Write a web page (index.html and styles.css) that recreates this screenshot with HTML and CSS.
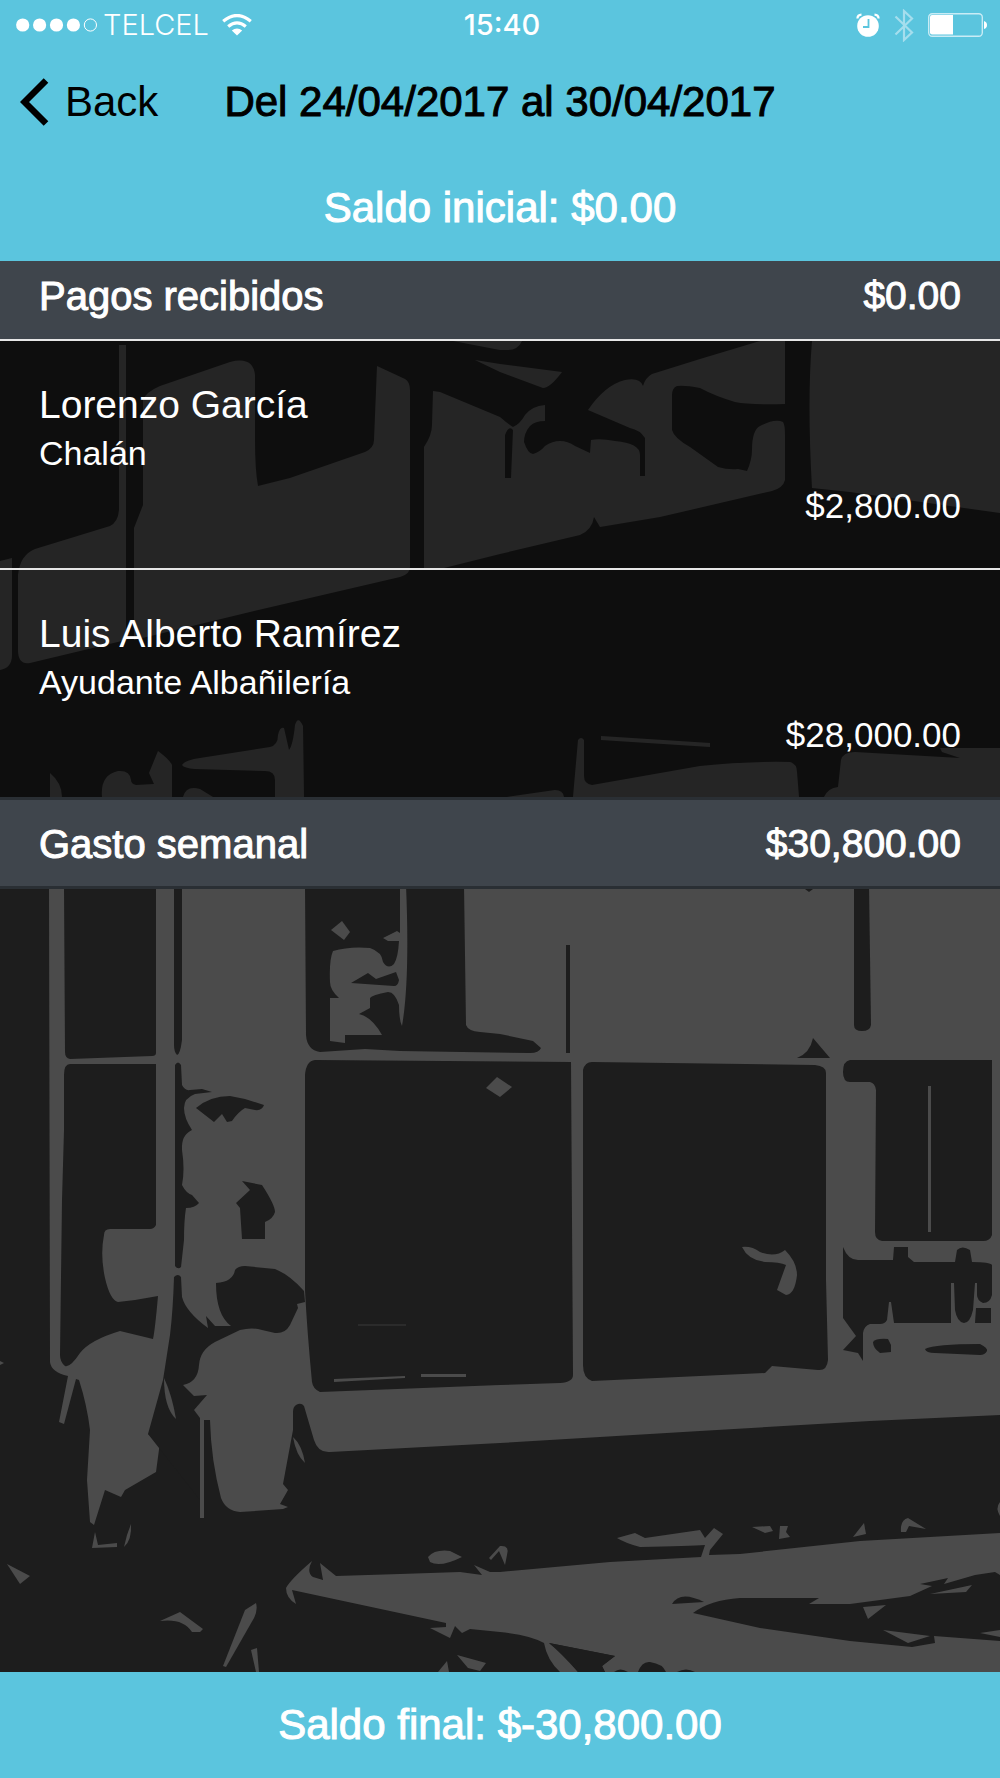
FILE: index.html
```html
<!DOCTYPE html>
<html lang="es">
<head>
<meta charset="utf-8">
<meta name="viewport" content="width=device-width, initial-scale=1">
<title>Del 24/04/2017 al 30/04/2017</title>
<link rel="stylesheet" href="styles.css">
</head>
<body>
<header class="top">
  <div class="status">
    <div class="status-left">
      <svg class="icon" width="82" height="14" viewBox="0 0 82 14" fill="#fff" role="img" aria-label="Señal">
        <circle cx="6.7" cy="7" r="6.6"/><circle cx="23.6" cy="7" r="6.6"/><circle cx="40.5" cy="7" r="6.6"/><circle cx="57.4" cy="7" r="6.6"/>
        <circle cx="74.4" cy="7" r="6.1" fill="none" stroke="#fff"/>
      </svg>
      <span class="carrier">TELCEL</span>
      <svg class="icon wifi" width="30" height="22" viewBox="0 0 30 22" role="img" aria-label="Wi-Fi">
        <path d="M1.2 7.2Q15-4.200 28.800 7.200M6.200 12.500Q15 5.200 23.800 12.500" fill="none" stroke="#fff" stroke-width="3.200"/>
        <path d="M9.800 16.400Q15 12.600 20.200 16.400L15 21.600Z" fill="#fff"/>
      </svg>
    </div>
    <time class="clock">15:40</time>
    <div class="status-right">
      <svg class="icon" width="24" height="24" viewBox="0 0 24 24" role="img" aria-label="Alarma">
        <circle cx="12" cy="13" r="10.800" fill="#fff"/>
        <path d="M1.400 5.500Q1.600 1.800 5.500 1.600M22.600 5.500Q22.400 1.800 18.500 1.600" fill="none" stroke="#fff" stroke-width="2.200"/>
        <path d="M12.500 6V14H7" fill="none" stroke="#5bc5de" stroke-width="1.800"/>
      </svg>
      <svg class="icon bluetooth" width="20" height="33" viewBox="0 0 20 33" role="img" aria-label="Bluetooth">
        <path d="M1.500 7.500L18 23.500L10 31V2L18 9.500L1.500 25.500" fill="none" stroke="#a5deed" stroke-width="2.200"/>
      </svg>
      <svg class="icon" width="60" height="24" viewBox="0 0 60 24" role="img" aria-label="Batería">
        <rect x=".7" y=".7" width="53.600" height="22.600" rx="3.500" fill="none" stroke="#c9ecf5" stroke-width="1.400"/>
        <path d="M4 2H25V21.500H4Q2 21.500 2 19.500V4Q2 2 4 2Z" fill="#fff"/>
        <path d="M56 8Q59 9 59 12T56 16Z" fill="#fff"/>
      </svg>
    </div>
  </div>
  <nav class="nav">
    <button class="back" type="button">
      <svg class="icon" width="30" height="48" viewBox="0 0 30 48" aria-hidden="true"><path d="M26 2.500L4.500 24L26 45.500" fill="none" stroke="#000" stroke-width="6.500"/></svg>
      <span>Back</span>
    </button>
    <h1 class="title medium">Del 24/04/2017 al 30/04/2017</h1>
  </nav>
  <p class="balance medium">Saldo inicial: $0.00</p>
</header>

<main class="content">
  <svg class="scene" viewBox="0 261 1000 1411" preserveAspectRatio="xMidYMin slice" aria-hidden="true">
    <g class="light">
      <path d="M119 345H126V640L30 663Q18 665 18 650V575Q20 555 35 549L110 526Q118 522 119 510Z"/>
      <path d="M0 561L12 558V655Q12 668 0 670Z"/>
      <path d="M134 528L143 505V400Q146 392 160 386L230 362Q253 356 255 375V440Q255 470 258 486L290 478L365 452Q374 448 374 440L377 366L405 379Q410 382 410 390V565Q411 574 400 577L250 612L134 640Z"/>
      <path d="M424 447Q432 435 432 425L433 391L440 392L500 417Q508 424 513 427Q520 424 525 415Q532 406 545 405V421Q535 421 530 426Q524 433 524 442Q528 454 533 454Q540 452 545 446Q560 436 575 446L590 453L591 440Q600 438 615 441Q640 443 640 455V476H645V438Q640 430 630 428L588 410Q605 385 625 380Q640 377 643 386Q645 378 652 374L700 359L760 341H785V404Q750 405 735 402Q715 396 700 388Q685 385 677 386Q672 388 672 395V430Q674 438 690 447L718 467Q728 470 738 469L747 471Q752 460 752 450Q752 430 760 426Q775 418 783 422Q785 425 785 435V480Q783 488 772 491L660 517L600 527L594 517Q592 530 580 535L500 554L440 569L424 570Z"/>
      <path d="M453 341H522Q518 350 508 350H500Z"/>
      <path d="M475 360L500 364L562 372Q550 388 543 388L500 372Z"/>
      <path d="M812 341H1000V513L850 492L812 488Q807 400 812 341Z"/>
      <path d="M50 797V773Q62 783 62 797Z"/>
      <path d="M102 797Q100 775 118 771Q130 770 131 780Q131 784 136 785L154 784L149 773L158 751Q170 760 172 765V797Z"/>
      <path d="M183 797Q186 785 200 789L213 797Z"/>
      <path d="M182 765Q185 760 200 758L270 747Q278 745 278 735Q280 726 284 728L289 750Q293 745 295 725Q298 715 303 726L304 797H275V780Q275 771 265 771L195 769Q184 768 182 765Z"/>
      <path d="M507 797L555 790Q563 790 564 797Z"/>
      <path d="M573 797L578 740Q581 736 584 740V776Q584 784 592 785L700 766Q750 761 790 762Q797 764 797 772L799 797Z"/>
      <path d="M601 736L710 743V747L601 740Z"/>
      <path d="M824 797Q828 788 838 787L841 760Q843 752 855 752L960 758L942 752L940 748H1000V797Z"/>
      <path d="M49 885H1000V1415L870 1421L700 1431L500 1443L330 1452Q318 1453 314 1440L304 1406Q301 1402 296 1405Q293 1407 293 1412V1430L283 1484L288 1490L280 1504L288 1507L283 1509L240 1512Q226 1511 221 1498Q211 1460 210 1420H204V1518H200V1418L148 1434L160 1442L156 1472L125 1490L121 1497L105 1490L94 1525L90 1522L87 1480L90 1430Q87 1405 79 1380L76 1379L64 1424L59 1422L68 1376Q51 1372 50 1362Z"/>
    </g>
    <g class="dark">
      <path d="M505 478V435Q509 425 513 430L511 478Z"/>
      <path d="M174 1277Q178 1273 181 1277L182 1297Q186 1312 208 1328L206 1316L215 1326H231Q216 1315 216 1283Q233 1282 235 1270Q238 1266 245 1266L275 1269Q290 1275 304 1291L305 1302L297 1304L298 1308L290 1325Q285 1334 275 1333L262 1330Q252 1327 240 1330L215 1342Q200 1350 199 1365Q198 1382 183 1385L194 1396L207 1395L194 1410L200 1418V1500L148 1434L163 1380L170 1335Q173 1310 174 1277Z"/>
      <path d="M70 1064H156V1225Q154 1229 150 1229H110Q104 1229 104 1235Q100 1255 105 1278Q110 1300 118 1302L135 1300L158 1296Q155 1330 153 1339L120 1331Q90 1340 80 1353Q70 1368 65 1366Q60 1362 60 1355L62 1200L64 1130V1075Q64 1064 70 1064Z"/>
      <path d="M64 885H156V1053Q156 1056 152 1056L70 1059Q65 1058 65 1052Z"/>
      <path d="M174 885H182V1040Q180 1055 177 1055Q174 1052 174 1045Z"/>
      <path d="M175 1065Q178 1060 181 1065L182 1085Q185 1091 190 1090L202 1089L212 1092L195 1094Q184 1098 184 1108Q184 1118 192 1130Q181 1135 182 1150Q185 1170 182 1185Q186 1193 192 1195L199 1203Q195 1208 186 1208Q184 1220 184 1240L181 1267Q178 1270 175 1266Z"/>
      <path d="M196 1108Q210 1096 230 1096L245 1099L264 1105Q262 1111 255 1110L245 1108Q238 1112 232 1121L227 1122L222 1114L214 1122Z"/>
      <path d="M242 1181L262 1185Q275 1205 275 1212Q273 1219 265 1222V1239H242L240 1208L236 1203L250 1190Z"/>
      <path d="M305 885H464L466 1025Q468 1031 480 1032L500 1034L533 1041L541 1048Q539 1053 530 1053L400 1051L365 1049L320 1052Q307 1050 306 1035Z"/>
      <path d="M315 1060L571 1062L573 1375Q573 1382 560 1383L500 1385L320 1392Q313 1389 312 1382Q307 1330 305 1290V1075Q306 1061 315 1060Z"/>
      <path d="M592 1062L815 1065Q826 1066 826 1073V1280L828 1360Q827 1371 818 1370L772 1366L765 1373L700 1376L592 1381Q583 1378 583 1365V1070Q585 1062 592 1062Z"/>
      <path d="M566 945H570V1053H566Z"/>
      <path d="M854 885H869L871 1025Q870 1031 862 1031Q854 1031 854 1025Z"/>
      <path d="M805 889H813L809 892Z"/>
      <path d="M797 1058Q810 1053 813 1038L830 1058Z"/>
      <path d="M850 1060H992V1235Q990 1241 983 1241H882Q875 1240 875 1232L876 1090Q875 1083 870 1082H850Q843 1082 843 1072Q843 1061 850 1060Z"/>
      <path d="M843 1247Q848 1260 858 1260H893L894 1247H908V1257L914 1262H955L957 1250Q962 1245 970 1250L972 1262Q990 1262 992 1265V1295Q990 1303 983 1303Q977 1300 977 1295V1283H975L973 1310Q970 1323 964 1323Q957 1322 955 1310L954 1283H951V1323H894L891 1302H889L887 1320Q885 1324 880 1324H870Q864 1326 863 1333V1361L858 1353L843 1350L856 1336L843 1318Z"/>
      <path d="M976 1308H991V1323H975Z"/>
      <path d="M873 1342Q876 1338 888 1339L891 1345V1352L880 1353Q873 1348 873 1342Z"/>
      <path d="M925 1349Q935 1344 980 1344Q988 1348 987 1351Q985 1355 980 1355L935 1353Q926 1353 925 1349Z"/>
    </g>
    <g class="light">
      <path d="M400 885H406Q410 980 402 1026Q399 1020 399 1005Q395 992 388 992Q372 995 370 998V1008L359 1014Q372 1017 382 1035H345V1043L330 1041V998H339Q330 990 330 982Q329 960 333 951Q350 946 370 948Q382 952 383 962Q388 970 394 964Q398 958 399 941H388L383 938L397 931L400 933Z"/>
      <path d="M331 930L342 921L350 932L344 940Z"/>
      <path d="M486 1088L497 1077L512 1087L500 1097Z"/>
      <path d="M742 1247Q752 1246 760 1252Q775 1258 785 1250Q797 1262 797 1275Q795 1294 786 1295L777 1290L786 1265Q780 1262 765 1262Q748 1260 742 1247Z"/>
      <path d="M928 1086H931V1232H928Z"/>
      <path d="M334 1379L405 1376V1378L334 1382Z"/>
      <path d="M421 1374H466V1377H421Z"/>
      <path d="M358 1324H406V1326H358Z" opacity=".3"/>
      <path d="M164 1378Q172 1395 176 1419Q164 1408 164 1378Z"/>
      <path d="M293 1437Q302 1445 305 1463Q296 1455 293 1437Z"/>
      <path d="M95 1532L98 1545L117 1543V1547L92 1548Z"/>
      <path d="M131 1524Q132 1540 124 1547L127 1535Z"/>
      <path d="M7 1564L30 1576L20 1584Z"/>
      <path d="M0 1361L4 1363L0 1365Z"/>
      <path d="M160 1621L180 1612L203 1629L200 1632H192Q183 1618 160 1621Z"/>
      <path d="M245 1610L256 1603Q258 1610 254 1618L226 1667L223 1666Z"/>
      <path d="M251 1650L257 1648L259 1672H256Z"/>
      <path d="M286 1588Q290 1580 312 1561Q306 1572 313 1577L323 1580L320 1563L336 1576L400 1574L460 1572L482 1575L474 1565L490 1572H500L610 1562L701 1557L705 1545Q690 1546 640 1547Q625 1543 617 1538L635 1533L645 1538L700 1530L705 1538L714 1528L723 1534L710 1550L709 1555L740 1554L860 1541L1000 1533V1672H605L602 1666L615 1656L549 1643Q560 1652 578 1672H560Q547 1660 544 1643Q530 1635 500 1632L470 1629L462 1633L455 1626L450 1638L430 1628L446 1627V1623L292 1590L296 1604Q286 1598 286 1588Z"/>
      <path d="M428 1557Q435 1549 450 1551L462 1557Q440 1568 430 1562Z"/>
      <path d="M489 1558L500 1546Q510 1545 507 1555L505 1565L499 1551L491 1560Z"/>
      <path d="M457 1655L486 1663L480 1671L468 1668Z"/>
      <path d="M438 1672L447 1661L449 1672Z"/>
      <path d="M752 1527L770 1526L773 1531L765 1533Z"/>
      <path d="M780 1526H788L786 1532L790 1537L779 1539Z"/>
      <path d="M853 1537L864 1523L866 1534Z"/>
      <path d="M901 1532Q900 1520 908 1518L926 1529L909 1526L906 1532Z"/>
      <path d="M1000 1502Q995 1508 1000 1516Z"/>
    </g>
    <g class="dark">
      <path d="M351 983L368 973L376 979L396 972L399 980Q398 986 394 986Z"/>
      <path d="M549 1643L615 1656L602 1666L605 1672H578Q566 1656 549 1643Z"/>
      <path d="M614 1672Q620 1667 628 1672Z"/>
      <path d="M638 1672Q642 1661 650 1662Q663 1664 666 1672Z"/>
      <path d="M677 1672Q686 1667 695 1672Z"/>
      <path d="M672 1604Q680 1590 704 1602Z"/>
      <path d="M693 1613Q710 1600 740 1598H819L809 1604H850L880 1600L910 1596L932 1586L920 1584L948 1578L944 1584L975 1575L995 1572L1000 1575V1641L934 1636L935 1643L912 1647L850 1641L760 1628Z"/>
    </g>
    <g class="light">
      <path d="M930 1594L972 1585L966 1592Z"/>
      <path d="M863 1607L886 1605L868 1619Z"/>
      <path d="M883 1630L930 1636L908 1643Z"/>
      <path d="M980 1633L1000 1630V1637Z"/>
    </g>
  </svg>

  <section class="report">
    <div class="band band-first medium"><h2>Pagos recibidos</h2><span class="total">$0.00</span></div>
    <ul class="payments">
      <li class="payment">
        <span class="name">Lorenzo García</span>
        <span class="role">Chalán</span>
        <span class="amount">$2,800.00</span>
      </li>
      <li class="payment">
        <span class="name">Luis Alberto Ramírez</span>
        <span class="role">Ayudante Albañilería</span>
        <span class="amount">$28,000.00</span>
      </li>
    </ul>
    <div class="band band-total medium"><h2>Gasto semanal</h2><span class="total">$30,800.00</span></div>
  </section>
</main>

<footer class="footer medium">Saldo final: $-30,800.00</footer>
</body>
</html>
```
FILE: styles.css
```css
* {
  box-sizing: border-box;
}

body {
  margin: 0;
  min-height: 100vh;
  display: flex;
  flex-direction: column;
  background: #1d1d1d;
  color: #fff;
  font-family: "Liberation Sans", Arial, sans-serif;
}

h1, h2, p, ul {
  margin: 0;
  padding: 0;
  font-size: inherit;
  font-weight: inherit;
}

.icon {
  display: block;
  flex: none;
}

/* Medium weight: regular outlines, slightly thickened */
.medium {
  -webkit-text-stroke: 1px currentColor;
}

.top,
.footer {
  background: #5bc5de;
}

.status {
  display: grid;
  grid-template-columns: 1fr auto 1fr;
  align-items: center;
  height: 50px;
  padding: 0 12px 0 16px;
  font: 300 29px/50px Inter, "Liberation Sans", sans-serif;
}

.status-left,
.status-right {
  display: flex;
  align-items: center;
}

.status-left {
  gap: 5px;
}

.wifi {
  margin-left: 8px;
}

.status-right {
  justify-content: flex-end;
  gap: 14px;
}

.clock {
  font-weight: 500;
}

.nav {
  display: grid;
  grid-template-columns: 1fr auto 1fr;
  align-items: center;
  height: 104px;
  padding: 0 20px;
  color: #000;
  font-size: 42px;
}

.title {
  white-space: nowrap;
}

.back {
  justify-self: start;
  display: flex;
  align-items: center;
  gap: 15px;
  padding: 0;
  border: 0;
  background: none;
  color: inherit;
  font: inherit;
}

.balance,
.footer {
  text-align: center;
  font-size: 42px;
}

.balance {
  padding-top: 1px;
  line-height: 106px;
}

.content {
  position: relative;
  flex: 1;
}

.scene {
  position: absolute;
  inset: 0;
  width: 100%;
  height: 100%;
}

.light {
  fill: #4b4b4b;
}

.dark {
  fill: #1d1d1d;
}

.report {
  position: relative;
}

.band {
  display: flex;
  justify-content: space-between;
  padding: 0 39px;
  background: #3f454c;
  font-size: 40px;
}

.total {
  font-size: 39px;
}

.band-first {
  padding-bottom: 8px;
  line-height: 70px;
}

.band-total {
  padding-top: 2px;
  border: solid #2a2f34;
  border-width: 3px 0;
  line-height: 84px;
}

.payments {
  list-style: none;
}

.payment {
  display: flex;
  flex-direction: column;
  padding: 40px 39px 38px;
  border-top: 2px solid #e6e6e6;
  background: rgba(0, 0, 0, 0.5);
  background-clip: padding-box;
  line-height: 48px;
}

.name {
  font-size: 39px;
}

.role {
  font-size: 34px;
}

.amount {
  align-self: flex-end;
  margin-top: 5px;
  font-size: 35px;
}

.footer {
  line-height: 106px;
}
```
